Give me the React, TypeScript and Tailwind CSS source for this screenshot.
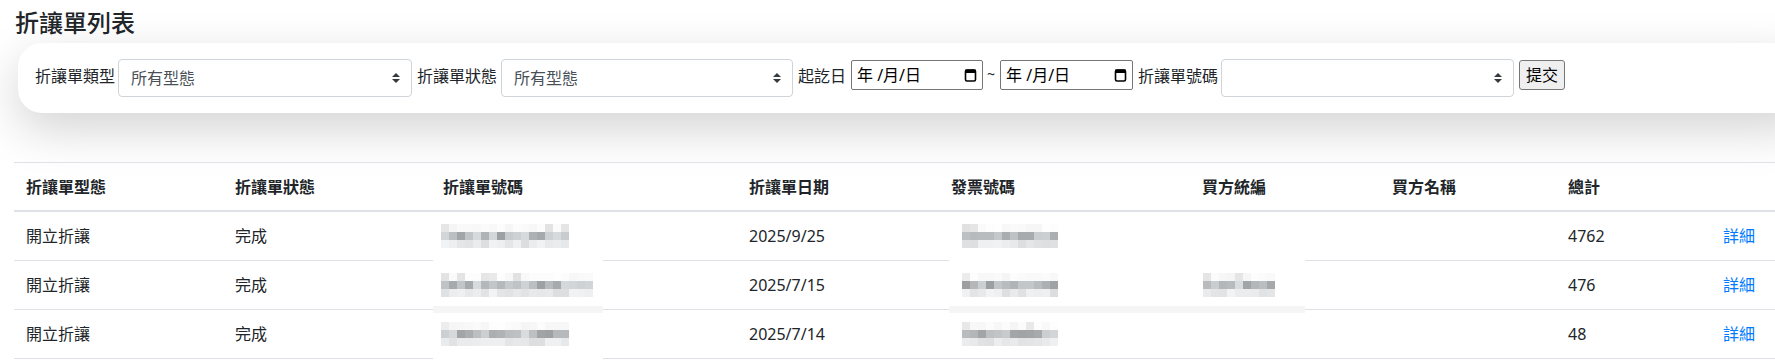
import React from "react";

// deterministic noise for the redacted (mosaic) cells
function makeRand(seed: number) {
  let s = seed;
  return () => {
    s = (s * 16807) % 2147483647;
    return s / 2147483647;
  };
}

function Mosaic({ blocks, seed, className = "" }: { blocks: number; seed: number; className?: string }) {
  const r = makeRand(seed);
  const rows = [0, 1, 2].map((row) =>
    Array.from({ length: blocks }, () => {
      const n = r();
      if (row === 0) {
        const v = n < 0.12 ? 224 + Math.round(r() * 14) : 245 + Math.round(r() * 9);
        return `rgb(${v},${v},${v})`;
      }
      if (row === 1) {
        const v = 156 + Math.round(n * 62);
        return `rgb(${v},${v + 3},${v + 6})`;
      }
      const v = 220 + Math.round(n * 22);
      return `rgb(${v},${v + 1},${v + 2})`;
    })
  );
  return (
    <div className={`relative z-10 flex flex-col h-6 ${className}`}>
      {rows.map((row, i) => (
        <div key={i} className="flex h-2">
          {row.map((c, j) => (
            <div key={j} className="w-2 h-2" style={{ backgroundColor: c }} />
          ))}
        </div>
      ))}
    </div>
  );
}

function SelectBox({ width, value }: { width: string; value: string }) {
  return (
    <div className={`relative ml-[5px] h-[38px] ${width}`}>
      <select className="w-full h-full appearance-none bg-white border border-[#ced4da] rounded-[4px] pl-3 pr-7 text-[#495057] leading-6 outline-none">
        <option>{value}</option>
      </select>
      <svg
        className="absolute right-3 top-[14px] pointer-events-none"
        width="8"
        height="10"
        viewBox="0 0 4 5"
      >
        <path d="M2 0L0 2h4zm0 5L0 3h4z" fill="#343a40" />
      </svg>
    </div>
  );
}

function DateBox({ width }: { width: string }) {
  return (
    <div
      className={`ml-[5px] mt-px h-[30px] ${width} flex items-center justify-between border border-[#767676] rounded-[2px] pl-[5px] pr-[5px] text-black`}
    >
      <span className="whitespace-nowrap">年 /月/日</span>
      <svg width="13" height="14" viewBox="0 0 13 14">
        <rect x="1.5" y="2" width="10" height="11" rx="1.5" fill="none" stroke="#000" strokeWidth="1.6" />
        <rect x="1" y="1.5" width="11" height="3.5" rx="1" fill="#000" />
      </svg>
    </div>
  );
}

const headers = ["折讓單型態", "折讓單狀態", "折讓單號碼", "折讓單日期", "發票號碼", "買方統編", "買方名稱", "總計", ""];
const colWidths = [209, 208, 306, 202, 251, 190, 176, 155, 64];

const rows = [
  { date: "2025/9/25", total: "4762", no: 16, inv: 12, buyer: 0, seed: 11 },
  { date: "2025/7/15", total: "476", no: 19, inv: 12, buyer: 9, seed: 47 },
  { date: "2025/7/14", total: "48", no: 16, inv: 12, buyer: 0, seed: 83 },
];

export default function App() {
  const td = "p-3 align-top border-t border-b border-[#dee2e6]";
  return (
    <div className="w-[1775px] h-[360px] overflow-hidden bg-white text-[#212529] text-base leading-6 font-['Noto_Sans','Noto_Sans_CJK_TC',sans-serif]">
      <div className="pl-[14px] pt-2">
        <h4 className="ml-px text-[24px] leading-[29px] font-medium mb-[6px]">折讓單列表</h4>

        <form className="ml-1 w-[1790px] h-[70px] rounded-3xl bg-white shadow-[0_1rem_3rem_rgba(0,0,0,0.175)] flex items-start pt-4 pl-[17px]">
          <label className="mt-[5px] w-[78px] whitespace-nowrap">折讓單類型</label>
          <SelectBox width="w-[294px]" value="所有型態" />
          <label className="ml-[5px] mt-[5px] w-[79px] whitespace-nowrap">折讓單狀態</label>
          <SelectBox width="w-[292px]" value="所有型態" />
          <label className="ml-[5px] mt-[5px] w-[48px] whitespace-nowrap">起訖日</label>
          <DateBox width="w-[132px]" />
          <span className="ml-[4px] mt-[5px] text-sm">~</span>
          <DateBox width="w-[133px]" />
          <label className="ml-[5px] mt-[5px] w-[78px] whitespace-nowrap">折讓單號碼</label>
          <SelectBox width="w-[293px]" value="" />
          <button
            type="button"
            className="ml-[5px] mt-px h-[30px] px-[6px] bg-[#efefef] border border-[#767676] rounded-[3px] text-black leading-6"
          >
            提交
          </button>
        </form>

        <div className="relative mt-[49px]">
          <table className="table-fixed border-collapse w-[1761px]">
            <colgroup>
              {colWidths.map((w, i) => (
                <col key={i} style={{ width: w }} />
              ))}
            </colgroup>
            <thead>
              <tr>
                {headers.map((h, i) => (
                  <th
                    key={i}
                    className="px-3 pt-3 pb-[11px] text-left align-bottom font-bold border-t border-b-2 border-[#dee2e6] whitespace-nowrap"
                  >
                    {h}
                  </th>
                ))}
              </tr>
            </thead>
            <tbody>
              {rows.map((r) => (
                <tr key={r.date}>
                  <td className={td}>開立折讓</td>
                  <td className={td}>完成</td>
                  <td className={td}>
                    <Mosaic blocks={r.no} seed={r.seed} className="-ml-0.5" />
                  </td>
                  <td className={td}>{r.date}</td>
                  <td className={td}>
                    <Mosaic blocks={r.inv} seed={r.seed + 5} className="ml-[11px]" />
                  </td>
                  <td className={td}>
                    {r.buyer > 0 && <Mosaic blocks={r.buyer} seed={r.seed + 9} className="ml-px" />}
                  </td>
                  <td className={td}></td>
                  <td className={td}>{r.total}</td>
                  <td className={td}>
                    <a href="#" className="text-[#007bff] no-underline">詳細</a>
                  </td>
                </tr>
              ))}
            </tbody>
          </table>

          {/* white patches left around the redacted cells */}
          <div className="absolute left-[419px] top-[94px] w-[170px] h-[50px] bg-white" />
          <div className="absolute left-[419px] top-[144px] w-[170px] h-[7px] bg-[#f5f5f5]" />
          <div className="absolute left-[419px] top-[151px] w-[170px] h-[48px] bg-white" />
          <div className="absolute left-[935px] top-[94px] w-[356px] h-[50px] bg-white" />
          <div className="absolute left-[935px] top-[144px] w-[356px] h-[7px] bg-[#f5f5f5]" />
        </div>
      </div>
    </div>
  );
}
